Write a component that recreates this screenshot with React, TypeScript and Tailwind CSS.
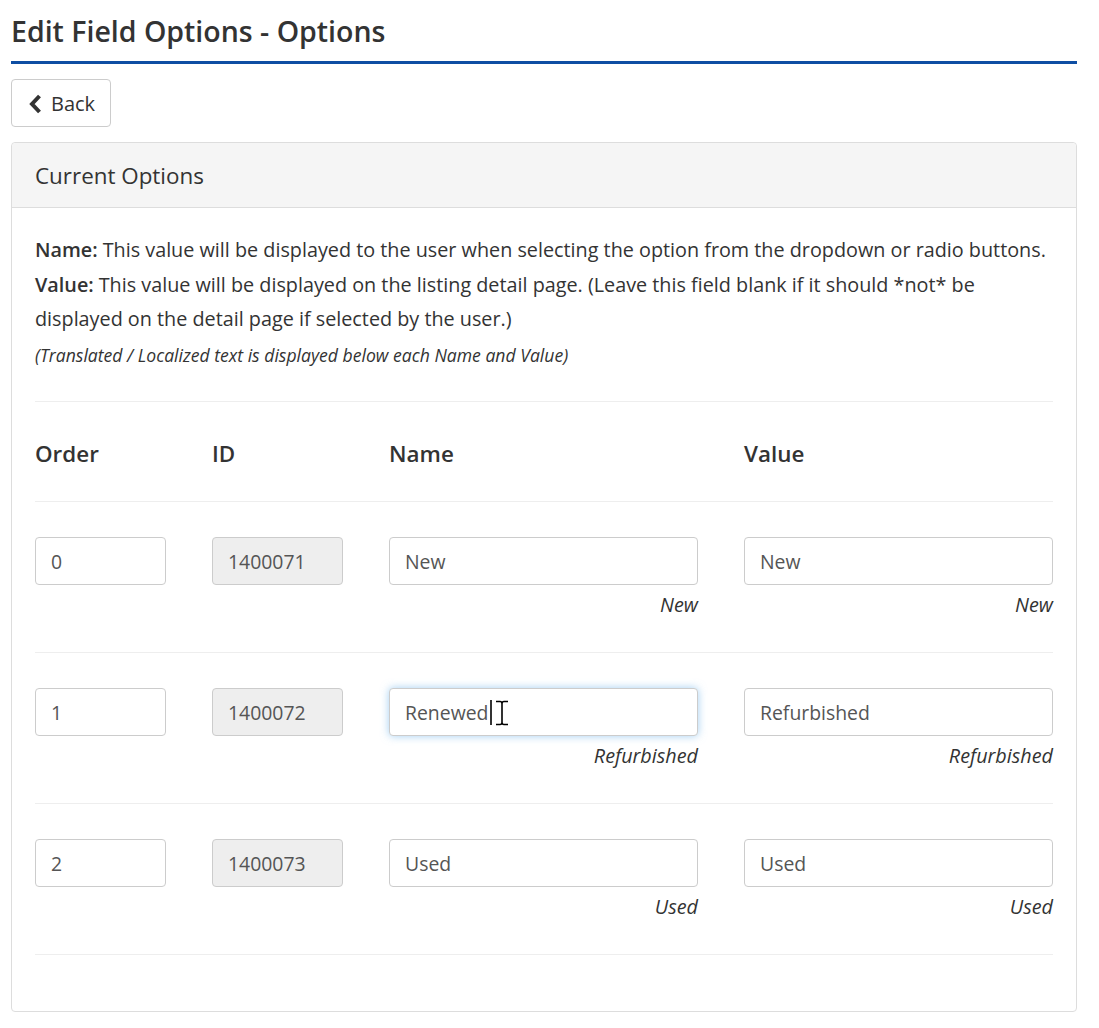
import { useState } from "react";

type OptionRow = {
  order: string;
  id: string;
  name: string;
  value: string;
  nameLocal: string;
  valueLocal: string;
};

const initialRows: OptionRow[] = [
  { order: "0", id: "1400071", name: "New", value: "New", nameLocal: "New", valueLocal: "New" },
  { order: "1", id: "1400072", name: "Renewed", value: "Refurbished", nameLocal: "Refurbished", valueLocal: "Refurbished" },
  { order: "2", id: "1400073", name: "Used", value: "Used", nameLocal: "Used", valueLocal: "Used" },
];

const inputBase =
  "h-[48px] w-full rounded-[4px] border border-[#ccc] px-[15px] pt-[2px] text-[19.4px] text-[#555] outline-none";

function ChevronLeft() {
  return (
    <svg width="15" height="20" viewBox="0 0 15 20" className="shrink-0">
      <path d="M11.5 2 L4 10 L11.5 18" fill="none" stroke="#333" strokeWidth="4" strokeLinejoin="miter" />
    </svg>
  );
}

function IBeam() {
  return (
    <svg width="14" height="26" viewBox="0 0 14 26" className="pointer-events-none">
      <path d="M1 1.5 H5 Q7 1.5 7 3.5 V22.5 Q7 24.5 5 24.5 H1 M13 1.5 H9 Q7 1.5 7 3.5 M7 22.5 Q7 24.5 9 24.5 H13" fill="none" stroke="#000" strokeWidth="1.6" />
    </svg>
  );
}

export default function App() {
  const [rows, setRows] = useState(initialRows);

  const update = (i: number, key: "order" | "name" | "value", v: string) => {
    setRows((prev) => prev.map((r, idx) => (idx === i ? { ...r, [key]: v } : r)));
  };

  return (
    <div className="min-h-screen bg-white pl-[11px] pr-[22px] pt-[13px] text-[#333]" style={{ fontFamily: '"Open Sans", "Noto Sans", sans-serif' }}>
      <h1 className="border-b-[3px] border-[#0e4ea3] pb-[12px] text-[28.5px] font-semibold leading-[36px]">
        Edit Field Options - Options
      </h1>

      <button className="mt-[15px] flex h-[48px] items-center gap-[8px] rounded-[4px] border border-[#ccc] bg-white pl-[16px] pr-[15px] pt-[1px] text-[20px] text-[#333]">
        <ChevronLeft />
        Back
      </button>

      <div className="mt-[15px] rounded-[4px] border border-[#ddd] bg-white">
        <div className="flex h-[65px] items-center rounded-t-[4px] border-b border-[#ddd] bg-[#f5f5f5] px-[23px] pt-[2px] text-[22.4px]">
          Current Options
        </div>

        <div className="px-[23px] pb-[56px] pt-[25px]">
          <div className="text-[19.8px] leading-[34.5px]">
            <p>
              <b className="mr-[5px] font-semibold">Name:</b>This value will be displayed to the user when selecting the option from the dropdown or radio buttons.
            </p>
            <p>
              <b className="mr-[5px] font-semibold">Value:</b>
              <span>This value will be displayed on the listing detail page. (Leave this field blank if it should *not* be</span>
              <br />
              <span>displayed on the detail page if selected by the user.)</span>
            </p>
            <p className="text-[17.6px] italic leading-[36px]">
              (Translated / Localized text is displayed below each Name and Value)
            </p>
          </div>

          <div className="mt-[28px] grid h-[101px] grid-cols-[131px_131px_1fr_1fr] items-center gap-x-[46px] border-y border-[#eee] pt-[5px] text-[22.4px] font-semibold">
            <div>Order</div>
            <div>ID</div>
            <div>Name</div>
            <div>Value</div>
          </div>

          {rows.map((r, i) => (
            <div key={r.id} className="grid h-[151px] grid-cols-[131px_131px_1fr_1fr] gap-x-[46px] border-b border-[#eee] pt-[35px]">
              <input className={`${inputBase} bg-white`} value={r.order} onChange={(e) => update(i, "order", e.target.value)} />
              <input className={`${inputBase} bg-[#eee]`} value={r.id} readOnly />
              <div>
                <div className="relative">
                  <input
                    className={`${inputBase} bg-white ${i === 1 ? "border-[#66afe9] shadow-[0_0_8px_rgba(102,175,233,0.6)]" : ""}`}
                    value={r.name}
                    onChange={(e) => update(i, "name", e.target.value)}
                  />
                  {i === 1 && (
                    <div className="pointer-events-none absolute left-[101px] top-[12px] flex items-center gap-[3px]">
                      <span className="block h-[25px] w-[2px] bg-[#333]" />
                      <IBeam />
                    </div>
                  )}
                </div>
                <div className="mt-[6px] text-right text-[19.8px] italic leading-[28px]">{r.nameLocal}</div>
              </div>
              <div>
                <input className={`${inputBase} bg-white`} value={r.value} onChange={(e) => update(i, "value", e.target.value)} />
                <div className="mt-[6px] text-right text-[19.8px] italic leading-[28px]">{r.valueLocal}</div>
              </div>
            </div>
          ))}
        </div>
      </div>
    </div>
  );
}
